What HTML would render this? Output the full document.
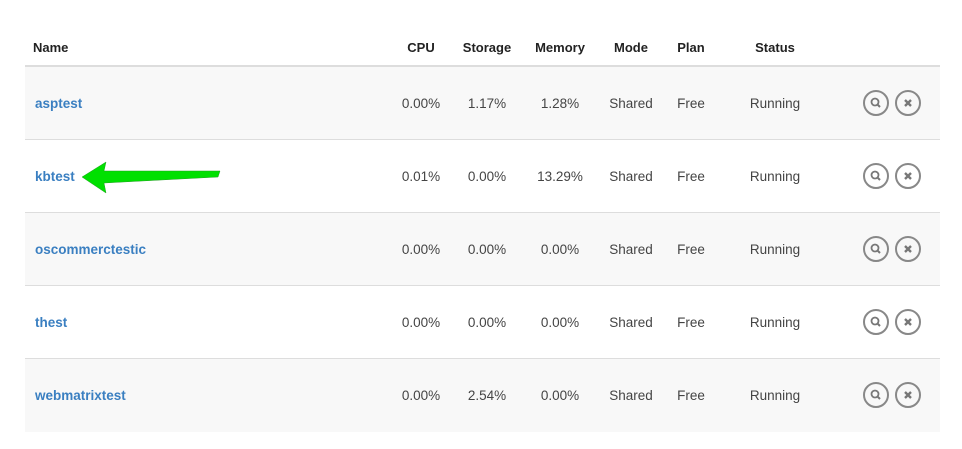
<!DOCTYPE html><html><head><style>
body{margin:0;background:#fff;font-family:"Liberation Sans",sans-serif;width:962px;height:449px;position:relative;overflow:hidden}
.h{position:absolute;top:40px;font-size:13px;font-weight:bold;color:#222}
.row{position:absolute;left:25px;width:915px;height:72px;border-bottom:1px solid #ddd}
.c{position:absolute;font-size:13.5px;color:#444;transform:translateX(-50%);top:29px}
.n{position:absolute;left:10px;top:29px;font-size:13.5px;font-weight:bold;color:#3a7fc1}
.i{position:absolute;top:23px;width:22px;height:22px;border:2px solid #888;border-radius:50%;}
</style></head><body>
<div class="h" style="left:33px">Name</div>
<div class="h" style="left:421px;transform:translateX(-50%)">CPU</div>
<div class="h" style="left:487px;transform:translateX(-50%)">Storage</div>
<div class="h" style="left:560px;transform:translateX(-50%)">Memory</div>
<div class="h" style="left:631px;transform:translateX(-50%)">Mode</div>
<div class="h" style="left:691px;transform:translateX(-50%)">Plan</div>
<div class="h" style="left:775px;transform:translateX(-50%)">Status</div>
<div style="position:absolute;left:25px;top:65px;width:915px;height:2px;background:#ddd"></div>
<div id="rows"></div>
<script>
var d=[["asptest","0.00%","1.17%","1.28%"],["kbtest","0.01%","0.00%","13.29%"],["oscommerctestic","0.00%","0.00%","0.00%"],["thest","0.00%","0.00%","0.00%"],["webmatrixtest","0.00%","2.54%","0.00%"]];
var h="";d.forEach(function(r,k){var top=67+k*73;var last=k==4?"border-bottom:none;height:73px;":"";
h+='<div class="row" style="top:'+top+'px;background:'+(k%2==0?'#f8f8f8':'#fff')+';'+last+'"><div class="n">'+r[0]+'</div>'+
'<div class="c" style="left:396px">'+r[1]+'</div><div class="c" style="left:462px">'+r[2]+'</div><div class="c" style="left:535px">'+r[3]+'</div>'+
'<div class="c" style="left:606px">Shared</div><div class="c" style="left:666px">Free</div><div class="c" style="left:750px">Running</div>'+
'<div class="i" style="left:838px"><svg width="22" height="22"><circle cx="10" cy="10" r="3.5" fill="none" stroke="#777" stroke-width="1.8"/><path d="M12.5 12.5L15 15" stroke="#777" stroke-width="2"/></svg></div>'+
'<div class="i" style="left:870px"><svg width="22" height="22"><path d="M8 8L14 14M14 8L8 14" stroke="#777" stroke-width="2.4"/></svg></div></div>';});
document.getElementById("rows").innerHTML=h;
</script>
<svg style="position:absolute;left:0;top:0" width="962" height="449"><polygon points="82,177 106,162 104,171 220,171 218,177 104,183 106,193" fill="#00e000" stroke="#22a022" stroke-width="0.5"/></svg>
</body></html>
